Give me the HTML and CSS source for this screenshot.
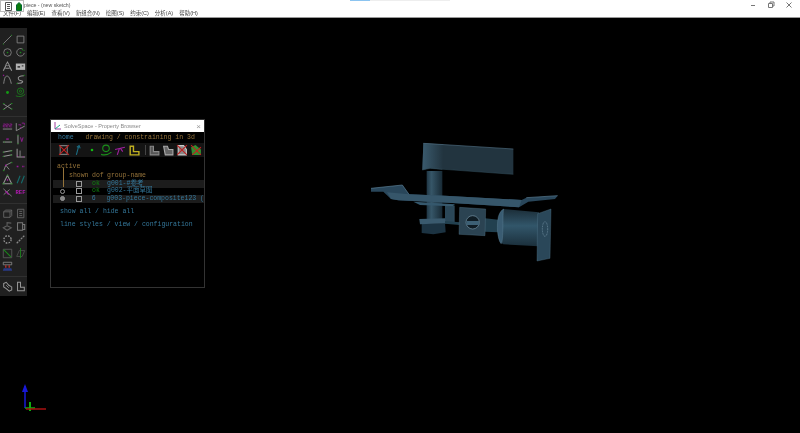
FILE: index.html
```html
<!DOCTYPE html>
<html>
   <head>
      <title>piece - (new sketch)</title>
      <meta charset="utf-8">
      <link rel="stylesheet" href="styles.css">
   </head>

   <body>
      <div class="app">
         <div class="topline"><div class="topline_blue"></div></div>
         <div class="titlebar">
            <span class="title">piece - (new sketch)</span>
            <div class="winbtns">
               <svg width="8" height="8" viewBox="0 0 8 8"><path d="M2 4.500H6" stroke="#777" fill="none"/></svg>
               <svg width="8" height="8" viewBox="0 0 8 8"><path d="M1.500 2.500H5.500V6.500H1.500ZM3 2.500V1H7V5H5.500" stroke="#777" fill="none"/></svg>
               <svg width="8" height="8" viewBox="0 0 8 8"><path d="M1.500 1.500L6.500 6.500M6.500 1.500L1.500 6.500" stroke="#777" fill="none"/></svg>
            </div>
         </div>
         <div class="menubar">
            <span>文件(F)</span><span>编辑(E)</span><span>查看(V)</span><span>新组合(N)</span><span>绘图(S)</span><span>约束(C)</span><span>分析(A)</span><span>帮助(H)</span>
         </div>

         <div class="canvas">
            <div class="toolbar">
               <div class="tools">
                  <svg viewBox="0 0 13 13"><path d="M1.500 11.500L11.500 1.500" stroke="#999" fill="none"/><path d="M1 12h1.500M10.500 1.500h1.500" stroke="#1a8f1a"/></svg>
                  <svg viewBox="0 0 13 13"><path d="M2.500 2.500H10.500V10.500H2.500Z" stroke="#999" fill="none"/></svg>
                  <svg viewBox="0 0 13 13"><circle cx="6.500" cy="6.500" r="4.500" stroke="#999" fill="none"/><circle cx="6.500" cy="6.500" r="1" fill="#1a9a1a"/></svg>
                  <svg viewBox="0 0 13 13"><path d="M9 2.500A4.500 4.500 0 1 0 11 7" stroke="#999" fill="none"/><circle cx="6.500" cy="6.500" r="1" fill="#1a9a1a"/><path d="M9 2v2M10 4h1.500" stroke="#1a8f1a"/></svg>
                  <svg viewBox="0 0 13 13"><path d="M1.500 11.500L6.500 1.500L11.500 11.500M4 8.500H9" stroke="#aaa" stroke-width="1.300" fill="none"/><circle cx="6.500" cy="4" r="1.600" stroke="#aaa" fill="#222"/></svg>
                  <svg viewBox="0 0 13 13"><path d="M1 3H12V10.500H1Z" fill="#ccc"/><path d="M3 6h3v2H3zM8 5h2v1.500H8z" fill="#444"/></svg>
                  <svg viewBox="0 0 13 13"><path d="M2 11.500C3 4 4 2.500 6 2.500S9.500 5 11 11.500" stroke="#aaa" fill="none"/><path d="M1 1.500H2.500M2 1v1.500" stroke="#b01ab0"/></svg>
                  <svg viewBox="0 0 13 13"><path d="M10.500 2C5.500 2 3 3.500 4 6S10 7.500 9 9.500 5 11 2.500 11" stroke="#aaa" stroke-width="1.200" fill="none"/><path d="M10 1.500h2M1.500 11.500h2" stroke="#1a8f1a"/></svg>
                  <svg viewBox="0 0 13 13"><circle cx="6.500" cy="6.500" r="1.700" fill="#12b012"/></svg>
                  <svg viewBox="0 0 13 13"><circle cx="6.500" cy="5" r="3.800" stroke="#1a8f1a" fill="none"/><circle cx="6.500" cy="5" r="1.300" stroke="#1a8f1a" fill="none"/><path d="M1 10.500C5 12 9 11.500 12 8.500" stroke="#1a8f1a" fill="none"/></svg>
                  <svg viewBox="0 0 13 13"><path d="M1.500 3.500L11.500 9.500M1.500 10L11.500 3" stroke="#aaa" fill="none"/><path d="M1 3h2M10.500 3h2M1 10h2M10.500 9.500h2" stroke="#1a9a1a"/></svg>
               </div>
               <hr>
               <div class="tools">
                  <svg viewBox="0 0 13 13"><path d="M1 9.500H12" stroke="#aaa"/><path d="M1.500 3.500h2.500v1.500H1.500V7H4M5 3.500h2.500v1.500H5V7H7.500M9 3.500h2.500v1.500H9V7h2.500" stroke="#b01ab0" stroke-width=".8" fill="none"/></svg>
                  <svg viewBox="0 0 13 13"><path d="M1.500 11.500V2.500M1.500 11.500L11.500 6" stroke="#aaa" fill="none"/><path d="M4 4.500h3v1M8 2.500h3v2M6 8h2" stroke="#b01ab0" fill="none"/></svg>
                  <svg viewBox="0 0 13 13"><path d="M1 9.500H12" stroke="#aaa" stroke-width="1.200"/><path d="M5 6h3" stroke="#b01ab0" stroke-width="1.500"/><path d="M2 9.500h1.500M9.500 9.500H11" stroke="#1a8f1a"/></svg>
                  <svg viewBox="0 0 13 13"><path d="M3.500 1V12" stroke="#aaa" stroke-width="1.200"/><path d="M6.500 4L8 9 9.500 4" stroke="#b01ab0" fill="none"/><path d="M3.500 1v1.500M3.500 10.500V12" stroke="#1a8f1a"/></svg>
                  <svg viewBox="0 0 13 13"><path d="M1 5L12 3M1 10L12 8" stroke="#aaa" stroke-width="1.200"/><path d="M1 5h1.500M10 3.500h2M1 10h1.500M10 8.500h2" stroke="#1a8f1a"/></svg>
                  <svg viewBox="0 0 13 13"><path d="M2.500 1V10.500H12" stroke="#aaa" stroke-width="1.200" fill="none"/><path d="M6 3V10" stroke="#aaa"/><path d="M2.500 9h1M9 10.500h1.500" stroke="#b01ab0"/></svg>
                  <svg viewBox="0 0 13 13"><path d="M2 11.500L4.500 5 11.500 1.500M4.500 5L8.500 10" stroke="#aaa" fill="none"/><circle cx="4.500" cy="5" r="1" fill="#b01ab0"/><path d="M1 11.500h2M10.500 2h2" stroke="#1a9a1a"/></svg>
                  <svg viewBox="0 0 13 13"><path d="M2 6.500h2.500M8.500 6.500H11" stroke="#b01ab0" stroke-width="1.500" stroke-dasharray="1.500 .5"/></svg>
                  <svg viewBox="0 0 13 13"><path d="M6.500 1.500L1.500 11.500H11.500Z" stroke="#aaa" stroke-width="1.200" fill="none"/><path d="M6.500 6V8" stroke="#b01ab0" stroke-width="1.500"/><path d="M5.500 1.500h2M.5 11.500h2.500M10 11.500h2.500" stroke="#1a9a1a"/></svg>
                  <svg viewBox="0 0 13 13"><path d="M2.500 11L6 2M7.500 11L11 2" stroke="#127a7a" stroke-width="1.300"/></svg>
                  <svg viewBox="0 0 13 13"><path d="M1.500 2L11.500 11M2 9L9 3" stroke="#999" fill="none"/><path d="M4 5L8 9" stroke="#b01ab0" stroke-width="1.500"/></svg>
                  <span class="ref_tool">REF</span>
               </div>
               <hr>
               <div class="tools dim">
                  <svg viewBox="0 0 13 13"><path d="M2 4.500L4 2.500H11.500V9L9.500 11H2ZM2 4.500H9.500V11M9.500 4.500L11.500 2.500" stroke="#777" fill="none"/></svg>
                  <svg viewBox="0 0 13 13"><path d="M3 1.500H10.500V11.500H3ZM5 4H8.500M5 6.500H8.500M5 9H8.500" stroke="#777" fill="none"/></svg>
                  <svg viewBox="0 0 13 13"><path d="M1.500 8L6 5.500 11 8 6 11ZM6 5.500V2L11 2.500" stroke="#666" stroke-width="1.300" fill="none"/></svg>
                  <svg viewBox="0 0 13 13"><path d="M3 2H9V11H3ZM9 4H11.500V10H9" stroke="#888" stroke-width="1.200" fill="none"/></svg>
                  <svg viewBox="0 0 13 13"><circle cx="6.500" cy="6.500" r="4.300" stroke="#aaa" stroke-width="1.500" stroke-dasharray="2 1.400" fill="none"/></svg>
                  <svg viewBox="0 0 13 13"><path d="M2 11L11 2" stroke="#999" stroke-width="1.500" stroke-dasharray="2.500 1" fill="none"/></svg>
                  <svg viewBox="0 0 13 13"><path d="M1.500 1.500H11.500V11.500H1.500Z" stroke="#666" fill="none"/><path d="M2 2L10.500 10.500" stroke="#1a9a1a" stroke-width="1.200"/></svg>
                  <svg viewBox="0 0 13 13"><path d="M2 10L5 3H11.500L8.500 10Z" stroke="#555" fill="none"/><path d="M6.500 0V12" stroke="#1a9a1a"/></svg>
                  <svg viewBox="0 0 13 13"><path d="M1.500 1.500H11.500V4.500H1.500Z" stroke="#999" fill="none"/><path d="M4.500 5V8" stroke="#d33" stroke-width="1.500"/><path d="M8.500 5V8" stroke="#d33" stroke-width="1.500"/><path d="M2 8.500H11L12 11.500H1Z" fill="#2a3f9a"/></svg>
               </div>
               <hr>
               <div class="tools">
                  <svg viewBox="0 0 13 13"><path d="M2 3L5 1.500 8 5 11.500 7V10.500L8.500 12 5 9 2 7Z" stroke="#aaa" stroke-width="1.200" fill="none"/><path d="M5 5L8 8" stroke="#aaa"/></svg>
                  <svg viewBox="0 0 13 13"><path d="M3 1.500H6.500V7.500H11V11.500H3Z" stroke="#aaa" stroke-width="1.200" fill="none"/></svg>
               </div>
            </div>

            <svg class="model" viewBox="0 0 600 405">
               <defs>
                  <linearGradient id="post" x1="0" x2="1" y1="0" y2="0">
                     <stop offset="0" stop-color="#1f3644"/>
                     <stop offset=".3" stop-color="#365668"/>
                     <stop offset="1" stop-color="#182a35"/>
                  </linearGradient>
                  <linearGradient id="armend" x1="0" x2="1" y1="0" y2="0">
                     <stop offset="0" stop-color="#3a5a6d"/>
                     <stop offset="1" stop-color="#22343f"/>
                  </linearGradient>
                  <linearGradient id="drum" x1="0" x2="0" y1="0" y2="1">
                     <stop offset="0" stop-color="#1b2d38"/>
                     <stop offset=".45" stop-color="#32566a"/>
                     <stop offset="1" stop-color="#1b2f3b"/>
                  </linearGradient>
               </defs>
               <path d="M185 108H232V262H185Z" fill="url(#post)"/>
               <path d="M175 25L445 42V118L195 100 172 105Z" fill="#22343f"/>
               <path d="M175 25L235 28 232 104 195 100 172 105Z" fill="url(#armend)"/>
               <path d="M175 25L445 42" stroke="#4e6d80" stroke-width="2" fill="none"/>
               <path d="M172 105L195 100 445 118" stroke="#35505f" stroke-width="1.500" fill="none"/>
               <path d="M18 160L112 150 132 178 240 182 470 195 484 188 578 182 570 192 490 200 462 217 250 203 100 196 78 192 55 170 18 170Z" fill="#29465a"/>
               <path d="M132 178L240 182 470 195 462 217 250 203 100 196 78 192 66 172Z" fill="#36566a"/>
               <path d="M18 160L112 150 132 178M484 188L578 182" stroke="#5b7f96" stroke-width="2" fill="none"/>
               <path d="M145 200L270 208 262 214 165 210Z" fill="#35586d"/>
               <path d="M240 212H268V265H240Z" fill="#2b4758"/>
               <path d="M240 212H268M268 212V265" stroke="#557689" fill="none"/>
               <path d="M170 266L240 264 242 292 205 298 170 294Z" fill="#1c3342"/>
               <path d="M163 252L240 250 242 265 165 268Z" fill="#3a5a6e"/>
               <path d="M240 258L284 262V270L240 266ZM360 250L400 254V292L360 290Z" fill="#22404f"/>
               <path d="M284 217L362 222 360 302 282 298Z" fill="#2b4352" stroke="#5b7f96"/>
               <circle cx="323" cy="262" r="20" fill="#0f1c24" stroke="#7796a8" stroke-width="2"/>
               <path d="M304 258H342V270H304Z" fill="#3d6075"/>
               <path d="M415 222L522 232 520 334 415 328C395 320 392 240 415 222Z" fill="url(#drum)"/>
               <path d="M400 245C395 270 396 310 408 326 416 328 412 240 416 222 408 226 403 235 400 245Z" fill="#3a5c72" stroke="#6b8fa5"/>
               <path d="M518 236L558 222 555 370 516 378Z" fill="#2a4759" stroke="#5b7f96"/>
               <ellipse cx="540" cy="282" rx="8" ry="22" fill="none" stroke="#7796a8" stroke-width="2" stroke-dasharray="3 2"/>
            </svg>

            <svg class="axes" viewBox="0 0 50 40">
               <path d="M15 28V6" stroke="#1818d8" stroke-width="1.500"/>
               <path d="M12 12L15 4 18 12Z" fill="#1818d8"/>
               <path d="M15 28H25" stroke="#0fae0f" stroke-width="1.500"/>
               <path d="M20 22V31" stroke="#0fae0f" stroke-width="2"/>
               <path d="M16 29H36" stroke="#a81010" stroke-width="1.500"/>
            </svg>

            <div class="browser">
               <div class="browser_title">
                  <svg width="7" height="8" viewBox="0 0 7 8"><path d="M1 0V7H7" stroke="#a040a0" fill="none"/><path d="M1 7L6 3" stroke="#2a8" fill="none"/></svg>
                  <span class="browser_name">SolveSpace - Property Browser</span>
                  <span class="browser_close">×</span>
               </div>
               <div class="browser_body">
                  <div class="nav"><span class="blue">home</span><span class="nav_path">drawing / constraining in 3d</span></div>
                  <div class="icons">
                     <svg viewBox="0 0 11 11"><path d="M2 1.500H8.500V9.500H2Z" stroke="#777" fill="none"/><path d="M1 1L10 10M10 1L1 10" stroke="#c02020"/></svg>
                     <svg viewBox="0 0 11 11"><path d="M4 10L6 2.500" stroke="#1c6f86"/><path d="M4.500 3L6.500 1.500 7.500 4" stroke="#1c6f86" fill="none"/></svg>
                     <svg viewBox="0 0 11 11"><circle cx="5.500" cy="5.500" r="1.200" fill="#14b814"/></svg>
                     <svg viewBox="0 0 11 11"><circle cx="5.500" cy="4" r="3" stroke="#1a8f1a" fill="none"/><path d="M1 9.500C4 10.500 8 9.500 10.500 7.500" stroke="#1a8f1a" fill="none"/></svg>
                     <svg viewBox="0 0 11 11"><path d="M1 5L10 3M5 4L3 10M6 4L8 7" stroke="#a020a0" fill="none"/></svg>
                     <svg viewBox="0 0 11 11"><path d="M2 2H5V7H10V10H2Z" stroke="#c0b020" stroke-width="1.300" fill="none"/></svg>
                     <i class="icon_sep"></i>
                     <svg viewBox="0 0 11 11"><path d="M2 2H5V7H10V10H2Z" fill="#555" stroke="#888"/></svg>
                     <svg viewBox="0 0 11 11"><path d="M1.500 2H5L6 5H10V10H3Z" fill="#666" stroke="#aaa"/></svg>
                     <svg viewBox="0 0 11 11"><path d="M2 1.500H7L9.500 5V10H2Z" fill="#888" stroke="#ccc"/><path d="M1 1L10 10M10 1L1 10" stroke="#c02020"/></svg>
                     <svg viewBox="0 0 11 11"><path d="M1 3L5 1 10 5V10H2Z" fill="#2f8f2f"/><path d="M1 1L10 10M10 3L2 10" stroke="#c02020"/></svg>
                  </div>
                  <div class="row_active"><span class="orange">active</span></div>
                  <div class="group_head orange"><span class="c_shown">shown</span><span class="c_dof">dof</span><span>group-name</span></div>
                  <div class="group_row stripe">
                     <span class="c_radio"></span><span class="c_shown"><i class="check"></i></span><span class="c_dof green">ok</span><span class="blue">g001-#参考</span>
                  </div>
                  <div class="group_row">
                     <span class="c_radio"><i class="radio"></i></span><span class="c_shown"><i class="check"></i></span><span class="c_dof green">ok</span><span class="blue">g002-平面草图</span>
                  </div>
                  <div class="group_row stripe">
                     <span class="c_radio"><i class="radio on"></i></span><span class="c_shown"><i class="check"></i></span><span class="c_dof blue">6</span><span class="blue">g003-piece-composite123 (</span>
                  </div>
                  <div class="link_row blue">show all / hide all</div>
                  <div class="link_row blue">line styles / view / configuration</div>
                  <div class="spine"></div>
               </div>
            </div>
         </div>

         <div class="thumb">
            <svg width="7" height="9" viewBox="0 0 7 9"><path d="M.5 .5H6.500V8.500H.5ZM2 2.500H5M2 4.500H5M2 6.500H5" stroke="#555" fill="#fff"/></svg>
            <svg width="6" height="9" viewBox="0 0 6 9"><path d="M.5 3L3 .5 5.500 3V8.500H.5Z" fill="#0c7a0c" stroke="#063"/></svg>
         </div>
      </div>
   </body>
</html>
```

FILE: styles.css
```css
html, body {margin: 0; padding: 0; height: 100%; overflow: hidden; background: #000;}
svg {display: block;}

.app {position: relative; width: 800px; height: 433px; display: flex; flex-direction: column; font-family: "Liberation Sans", "Noto Sans CJK SC", sans-serif; filter: blur(.35px);}

.topline {position: absolute; top: 0; left: 350px; width: 100px; height: 1px; background: #eee;}
.topline_blue {width: 20px; height: 1px; background: #8cc4f0;}

.titlebar {height: 9px; background: #fff; display: flex; align-items: center; font-size: 5.2px; color: #555;}
.title {margin-left: 24px; margin-top: 1px;}
.winbtns {margin-left: auto; margin-right: 7px; display: flex; gap: 10px;}

.menubar {height: 8px; background: #fff; border-bottom: 1px solid #999; display: flex; align-items: center; font-size: 5.5px; color: #444; padding-left: 3px; gap: 6px;}

.canvas {flex: 1; position: relative; background: #000;}

.toolbar {position: absolute; left: 0; top: 10px; width: 27px; height: 268px; background: #202020; padding-top: 5px; box-sizing: border-box;}
.toolbar hr {height: 1px; margin: 3px 0 3px; border: 0; background: #303030;}
.tools {display: grid; grid-template-columns: 13px 13px; grid-auto-rows: 13.3px; justify-items: center; align-items: center; padding-left: 1px;}
.tools svg {width: 11px; height: 11px; opacity: .85;}
.ref_tool {font: bold 5.5px "Liberation Mono", monospace; color: #b01ab0;}

.model {position: absolute; left: 365px; top: 117px; width: 200px; height: 135px;}
.axes {position: absolute; left: 10px; top: 362px; width: 50px; height: 40px;}

.browser {position: absolute; left: 50px; top: 101px; width: 155px; height: 169px; box-sizing: border-box; border: 1px solid #333; background: #000; display: flex; flex-direction: column;}
.browser_title {height: 12px; background: #fff; display: flex; align-items: center; gap: 3px; padding: 0 3px; font-size: 5.5px; color: #888; flex-shrink: 0;}
.browser_close {margin-left: auto; font-size: 8px; color: #999;}

.browser_body {position: relative; flex: 1; overflow: hidden; font: 6.5px/8px "Liberation Mono", "Noto Sans CJK SC", monospace; color: #aaa; white-space: nowrap;}
.blue {color: #34779a;}
.green {color: #108010;}
.orange {color: #95733a;}

.nav {padding: 2px 0 0 7px; height: 8px; display: flex;}
.nav_path {margin-left: 12px; color: #95733a;}

.icons {display: flex; align-items: center; gap: 2px; padding-left: 7px; height: 14px; margin-top: 1px; background: #141414;}
.icons svg {width: 12px; height: 12px;}
.icon_sep {width: 1px; height: 10px; margin-left: 3px; background: #444;}

.row_active {padding: 6px 0 0 6px; height: 8px;}
.group_head {display: flex; height: 8px; padding-left: 18px; margin-top: 1px;}
.group_row {display: flex; align-items: center; height: 7.6px; padding-left: 3px; margin-left: 2px;}
.stripe {background: #1c1c1c;}
.c_radio {width: 13px; display: flex; justify-content: center;}
.c_shown {width: 23px; display: inline-block;}
.group_row .c_shown {display: flex; padding-left: 7px; width: 16px;}
.c_dof {width: 15px; display: inline-block;}
.check {width: 4px; height: 4px; border: 1px solid #999; display: block;}
.radio {width: 3px; height: 3px; border: 1px solid #999; border-radius: 50%; display: block;}
.radio.on {background: #888;}

.link_row {padding-left: 9px; margin-top: 5px;}
.spine {position: absolute; left: 12px; top: 36px; width: 1px; height: 19px; background: #95733a;}

.thumb {position: absolute; left: 0; top: 0; width: 24px; height: 12px; box-sizing: border-box; background: #fff; border: 1px solid #bbb; display: flex; align-items: center; gap: 4px; padding-left: 4px;}
```
